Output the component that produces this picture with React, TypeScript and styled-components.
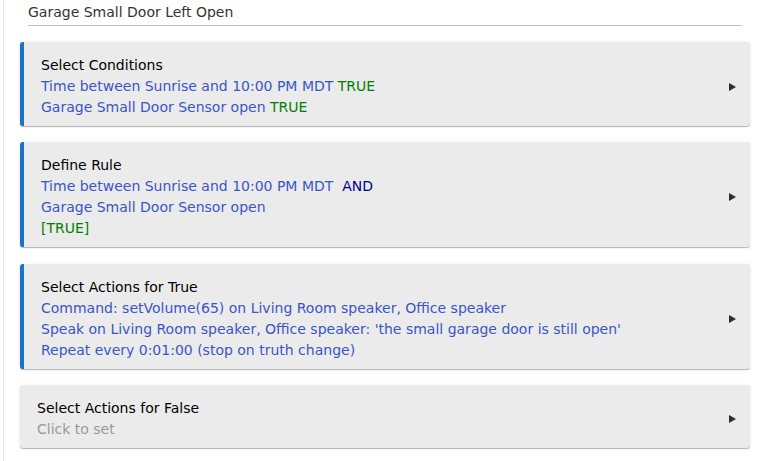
import styled, { createGlobalStyle } from 'styled-components';

const GlobalStyle = createGlobalStyle`
    html, body {
        margin: 0;
        padding: 0;
        background: #ffffff;
        font-family: "DejaVu Sans", Verdana, sans-serif;
    }
`;

const Page = styled.div`
    width: 758px;
    min-height: 461px;
    box-sizing: border-box;
    border-left: 1px solid #e4e4e4;
    margin-left: 3px;
    padding: 3px 8px 0 16px;
`;

const Title = styled.div`
    margin: 0 0 0 8px;
    padding: 0 0 4px 0;
    width: 714px;
    font-size: 14px;
    line-height: 18px;
    color: #333333;
    border-bottom: 1px solid #c4c4c4;
`;

const CardList = styled.div`
    display: flex;
    flex-direction: column;
    gap: 16.4px;
    margin-top: 16px;
`;

const Card = styled.div<{ $accent: boolean }>`
    display: flex;
    align-items: center;
    width: 730px;
    box-sizing: border-box;
    background: #ebebeb;
    border-radius: 3px;
    border-left: ${p => p.$accent ? '4px solid #1a73c8' : 'none'};
    padding: 13px 14px 8px 17px;
    box-shadow: 0 1px 1px rgba(0, 0, 0, 0.28), 0 0 4px rgba(0, 0, 0, 0.06);
    cursor: pointer;
`;

const CardBody = styled.div`
    flex: 1;
    font-size: 14px;
    line-height: 21px;
`;

const Heading = styled.div`
    color: #000000;
`;

const Line = styled.div<{ $muted?: boolean }>`
    color: ${p => p.$muted ? '#999999' : '#3a55c8'};
`;

const True = styled.span`
    color: #008000;
`;

const Op = styled.span`
    color: #00008b;
`;

const Arrow = styled.span`
    width: 0;
    height: 0;
    border-top: 4.5px solid transparent;
    border-bottom: 4.5px solid transparent;
    border-left: 7px solid #2d2d2d;
`;

export default function App() {
    return (
        <>
            <GlobalStyle />
            <Page>
                <Title>Garage Small Door Left Open</Title>
                <CardList>
                    <Card $accent>
                        <CardBody>
                            <Heading>Select Conditions</Heading>
                            <Line>Time between Sunrise and 10:00 PM MDT <True>TRUE</True></Line>
                            <Line>Garage Small Door Sensor open <True>TRUE</True></Line>
                        </CardBody>
                        <Arrow />
                    </Card>
                    <Card $accent>
                        <CardBody>
                            <Heading>Define Rule</Heading>
                            <Line>Time between Sunrise and 10:00 PM MDT&nbsp; <Op>AND</Op></Line>
                            <Line>Garage Small Door Sensor open</Line>
                            <Line><True>[TRUE]</True></Line>
                        </CardBody>
                        <Arrow />
                    </Card>
                    <Card $accent>
                        <CardBody>
                            <Heading>Select Actions for True</Heading>
                            <Line>Command: setVolume(65) on Living Room speaker, Office speaker</Line>
                            <Line>Speak on Living Room speaker, Office speaker: 'the small garage door is still open'</Line>
                            <Line>Repeat every 0:01:00 (stop on truth change)</Line>
                        </CardBody>
                        <Arrow />
                    </Card>
                    <Card $accent={false}>
                        <CardBody>
                            <Heading>Select Actions for False</Heading>
                            <Line $muted>Click to set</Line>
                        </CardBody>
                        <Arrow />
                    </Card>
                </CardList>
            </Page>
        </>
    );
}
